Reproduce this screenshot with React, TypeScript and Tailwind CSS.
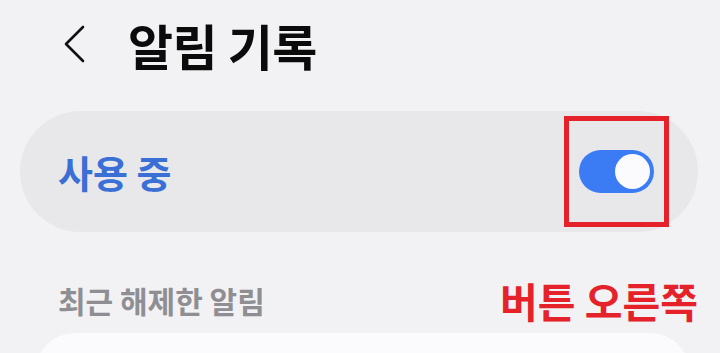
import { useState } from "react";

const font = { fontFamily: '"Noto Sans CJK KR", "Noto Sans", sans-serif' };

function Toggle({ on, onChange }: { on: boolean; onChange: (v: boolean) => void }) {
  return (
    <button
      onClick={() => onChange(!on)}
      className={`w-[75px] h-[43px] rounded-full flex items-center px-[4px] ${
        on ? "bg-[#3b7cf5] justify-end" : "bg-[#c4c4c8] justify-start"
      }`}
    >
      <span className="w-[35px] h-[35px] rounded-full bg-[#fbfbfd]" />
    </button>
  );
}

export default function App() {
  const [enabled, setEnabled] = useState(true);

  return (
    <div className="w-[720px] h-[353px] bg-[#f2f2f4] overflow-hidden flex flex-col" style={font}>
      {/* header */}
      <header className="shrink-0 h-[88px] flex items-center pl-[60px]">
        <button className="w-[28px] h-[40px] flex items-center justify-center">
          <svg width="24" height="40" viewBox="0 0 24 40" fill="none">
            <path d="M21 3 L4 20 L21 37" stroke="#111" strokeWidth="2.6" strokeLinecap="round" strokeLinejoin="round" />
          </svg>
        </button>
        <h1 className="ml-[40px] text-[49px] font-bold text-[#0b0b0b] leading-none tracking-[-0.5px]">알림 기록</h1>
      </header>

      {/* master switch */}
      <div className="shrink-0 mt-[23px] ml-[20px] mr-[22px] h-[121px] rounded-full bg-[#e8e8ea] flex items-center justify-between pl-[38px] pr-[29px]">
        <span className="text-[38px] font-bold text-[#3a6fd6] leading-none">사용 중</span>
        <div className="w-[105px] h-[111px] border-[5px] border-[#e52129] flex items-center justify-center">
          <Toggle on={enabled} onChange={setEnabled} />
        </div>
      </div>

      {/* section header */}
      <div className="shrink-0 mt-[43px] h-[50px] flex items-center justify-between pl-[58px] pr-[22px]">
        <span className="text-[30px] font-semibold text-[#8e8e93] leading-none">최근 해제한 알림</span>
        <span className="text-[41px] font-bold text-[#e52129] leading-none">버튼 오른쪽</span>
      </div>

      {/* list card */}
      <div className="shrink-0 mt-[8px] ml-[35px] mr-[30px] h-[80px] rounded-t-[40px] bg-[#fbfbfd]" />
    </div>
  );
}
